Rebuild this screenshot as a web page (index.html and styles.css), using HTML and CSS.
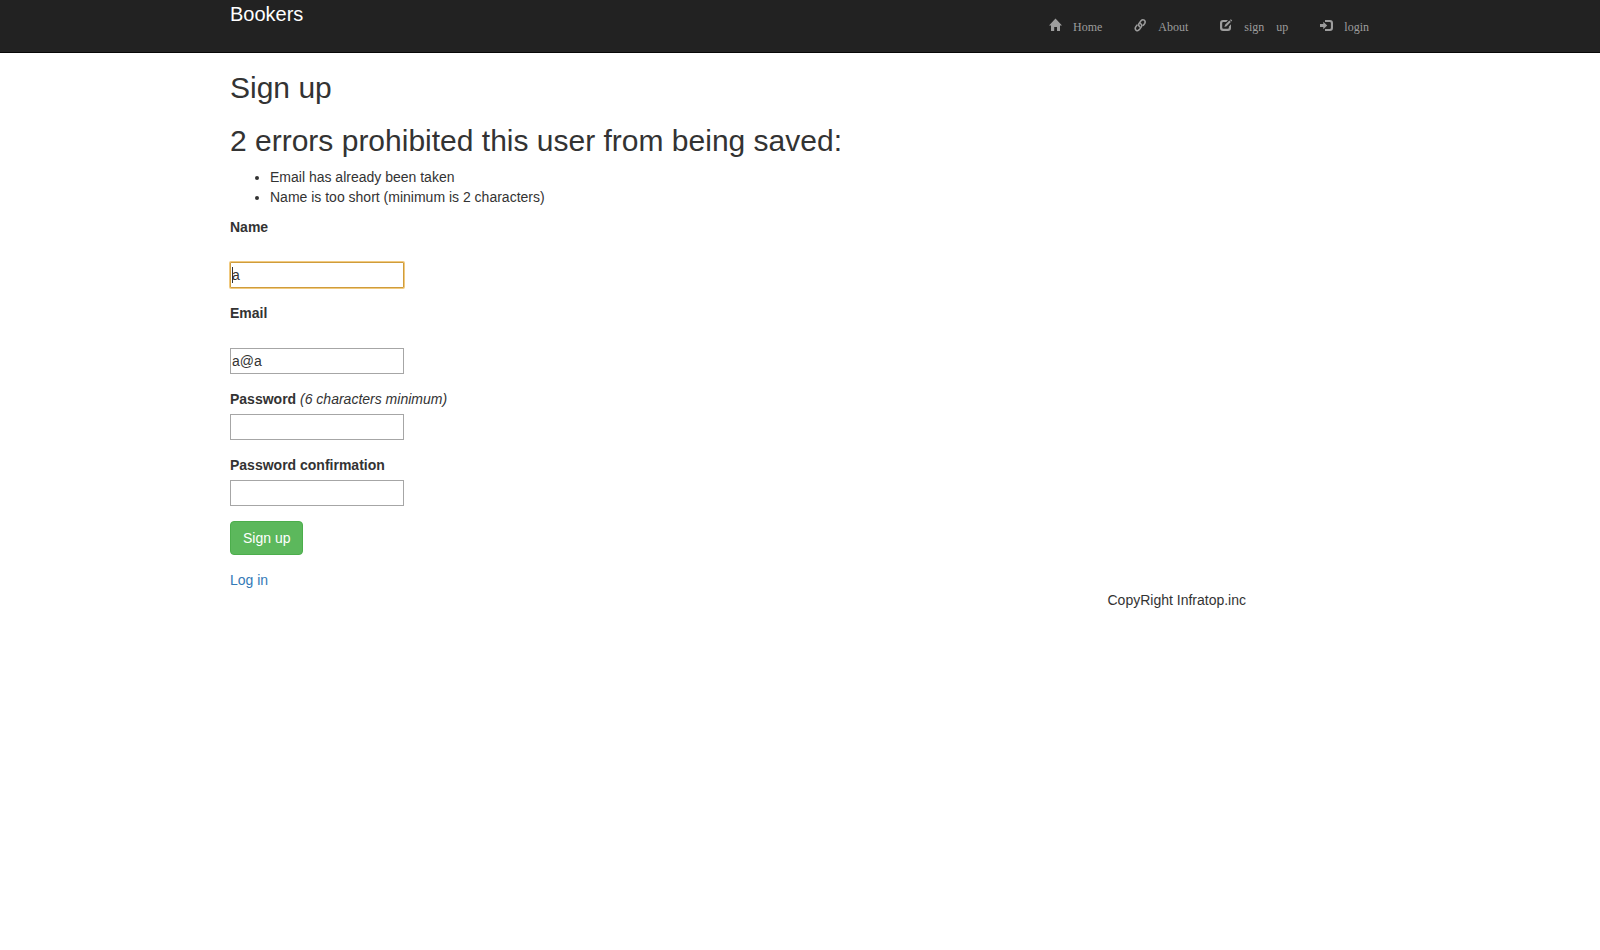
FILE: index.html
```html
<!DOCTYPE html>
<html lang="en">
<head>
<meta charset="utf-8">
<title>Bookers</title>
<link rel="stylesheet" href="styles.css">
</head>
<body>
<header class="navbar">
  <div class="container navbar-inner">
    <a class="brand">Bookers</a>
    <nav class="nav">
      <a class="nav-link"><svg class="icon" viewBox="0 0 12 12"><path d="M6.5 -.4 L13 6.4 H11 V12 H8 V8 H5.2 V12 H2 V6.4 H0 Z"/></svg><span>Home</span></a>
      <a class="nav-link"><svg class="icon stroke" viewBox="0 0 12 12"><path d="M6.2 8 Q3.8 6.6 4.9 4.7 L7 1.8 Q8.5 0 10.2 1.1 Q11.9 2.5 10.7 4.5 L9 6.8 M6.2 4.4 Q8.6 5.8 7.5 7.7 L5.4 10.6 Q3.9 12.4 2.2 11.3 Q.5 9.9 1.7 7.9 L3.4 5.6"/></svg><span>About</span></a>
      <a class="nav-link"><svg class="icon" viewBox="0 0 12 12"><path d="M8 1 L6.2 3 H3.3 Q2.2 3 2.2 4.1 V8.6 Q2.2 9.8 3.3 9.8 H7.7 Q8.9 9.8 8.9 8.6 V7.5 L11 5.3 V9 Q11 12 8 12 H3 Q0 12 0 9 V4 Q0 1 3 1 Z M9.4 1.6 L10.8 3 L6.6 7.3 L4.4 8 L5.1 5.8 Z M10 1 L10.8 .2 L12.2 1.6 L11.4 2.4 Z"/></svg><span>sign</span><span>up</span></a>
      <a class="nav-link"><svg class="icon" viewBox="0 0 12 12"><path d="M0 5.1 H3.3 V2.8 L7.2 6.5 L3.3 10.2 V7.9 H0 Z M5 1 H10 Q13 1 13 4 V9 Q13 12 10 12 H5 V10 H9.7 Q10.9 10 10.9 8.8 V4.2 Q10.9 3 9.7 3 H5 Z"/></svg><span>login</span></a>
    </nav>
  </div>
</header>
<main class="container">
  <h2>Sign up</h2>
  <form>
    <h2>2 errors prohibited this user from being saved:</h2>
    <ul class="errors">
      <li>Email has already been taken</li>
      <li>Name is too short (minimum is 2 characters)</li>
    </ul>
    <div class="field spaced">
      <label for="name">Name</label>
      <div class="focused"><input id="name" type="text" value="a"><i class="caret"></i></div>
    </div>
    <div class="field spaced">
      <label for="email">Email</label>
      <input id="email" type="text" value="a@a">
    </div>
    <div class="field">
      <div><label for="password">Password</label> <em>(6 characters minimum)</em></div>
      <input id="password" type="password">
    </div>
    <div class="field">
      <label for="confirmation">Password confirmation</label>
      <input id="confirmation" type="password">
    </div>
    <button class="button" type="button">Sign up</button>
  </form>
  <a class="link">Log in</a>
  <footer class="footer">CopyRight Infratop.inc</footer>
</main>
</body>
</html>
```
FILE: styles.css
```css
* { box-sizing: border-box; }
body {
  margin: 0;
  background: #fff;
  color: #333;
  font: 14px/20px "Liberation Sans", Arial, sans-serif;
}
.container { width: 1170px; margin: 0 auto; padding: 0 15px; }
.navbar { height: 53px; background: #222; border-bottom: 1px solid #080808; }
.navbar-inner { display: flex; justify-content: space-between; }
.brand { color: #fff; font-size: 20px; line-height: 28px; }
.nav {
  display: flex;
  gap: 32px;
  padding: 17px 1px 0 0;
  color: #9d9d9d;
  font: 12px/20px "Liberation Serif", serif;
}
.nav-link { display: flex; gap: 12px; }
.icon { width: 12px; height: 12px; margin-top: 2px; fill: #9d9d9d; overflow: visible; }
.stroke { fill: none; stroke: #9d9d9d; stroke-width: 1.5; }
main.container { padding-top: 18px; }
h2 { margin: 0 0 20px; font-size: 30px; line-height: 33px; font-weight: 500; }
form h2 { margin-bottom: 10px; }
.errors { margin: 0 0 10px; padding-left: 40px; }
.field { display: flex; flex-direction: column; align-items: flex-start; gap: 5px; margin-bottom: 15px; }
.spaced { gap: 25px; }
label { font-weight: 700; }
input {
  display: block;
  width: 174px;
  height: 26px;
  padding: 1px;
  border: 1px solid #a6a6a6;
  background: #fff;
  color: #333;
  font: inherit;
}
.focused { position: relative; }
.focused input { border-color: #cf9c3c; border-radius: 1px; box-shadow: 0 0 0 1px #f1ca80; }
.caret { position: absolute; left: 2px; top: 5px; width: 1px; height: 16px; background: #333; }
.button {
  display: block;
  height: 34px;
  margin-bottom: 15px;
  padding: 6px 12px;
  border: 1px solid #4cae4c;
  border-radius: 4px;
  background: #5cb85c;
  color: #fff;
  font: inherit;
}
.link { display: block; color: #337ab7; }
.footer { padding-left: 877.5px; }
```
